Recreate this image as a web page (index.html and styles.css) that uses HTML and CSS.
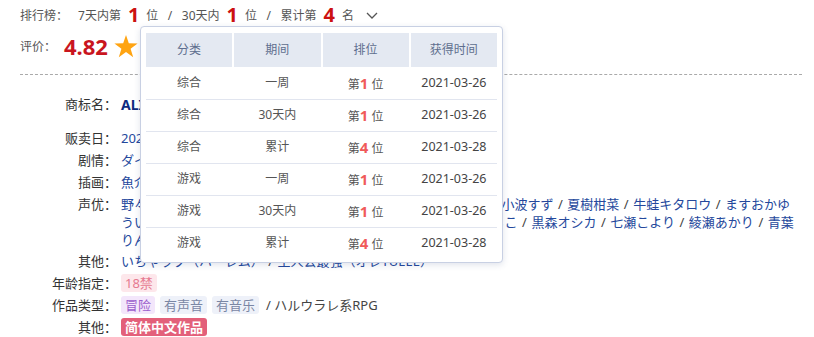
FILE: index.html
```html
<!DOCTYPE html>
<html lang="zh-CN">
<head>
    <meta charset="utf-8">
    <title>作品详情</title>
    <link rel="stylesheet" href="styles.css">
</head>
<body>
<div class="page">
    <div class="summary">
        <div class="rank">
            <span class="caption">排行榜：</span>
            <span class="first">7天内第</span><b class="num">1</b><span>位</span>
            <span class="slash">/</span>
            <span>30天内</span><b class="num">1</b><span>位</span>
            <span class="slash">/</span>
            <span>累计第</span><b class="num">4</b><span>名</span>
            <svg class="chevron" width="12" height="7" viewBox="0 0 12 7"><polyline points="1,1 6,6 11,1" fill="none" stroke="#555" stroke-width="1.3"/></svg>
        </div>
        <div class="score">
            <span class="caption">评价：</span>
            <b class="rating">4.82</b>
            <svg class="star" width="24" height="23" viewBox="0 0 24 23"><polygon points="12,0 14.8,8.3 23.6,8.4 16.6,13.7 19.2,22.2 12,17.1 4.8,22.2 7.4,13.7 0.4,8.4 9.2,8.3" fill="#ffa412"/></svg>
        </div>
    </div>

    <!-- rank history popup -->
    <div class="rank-popup">
        <div class="rank-head">
            <span>分类</span><span>期间</span><span>排位</span><span>获得时间</span>
        </div>
        <div class="rank-row"><span>综合</span><span>一周</span><span>第<b>1</b>位</span><span class="date">2021-03-26</span></div>
        <div class="rank-row"><span>综合</span><span>30天内</span><span>第<b>1</b>位</span><span class="date">2021-03-26</span></div>
        <div class="rank-row"><span>综合</span><span>累计</span><span>第<b>4</b>位</span><span class="date">2021-03-28</span></div>
        <div class="rank-row"><span>游戏</span><span>一周</span><span>第<b>1</b>位</span><span class="date">2021-03-26</span></div>
        <div class="rank-row"><span>游戏</span><span>30天内</span><span>第<b>1</b>位</span><span class="date">2021-03-26</span></div>
        <div class="rank-row"><span>游戏</span><span>累计</span><span>第<b>4</b>位</span><span class="date">2021-03-28</span></div>
    </div>

    <div class="info">
        <div class="info-row maker">
            <div class="info-label">商标名：</div>
            <div class="info-value"><a href="#" class="brand">ALICESOFT</a></div>
        </div>
        <div class="info-row">
            <div class="info-label">贩卖日：</div>
            <div class="info-value"><a href="#">2021年03月25日 0時</a></div>
        </div>
        <div class="info-row">
            <div class="info-label">剧情：</div>
            <div class="info-value"><a href="#">ダイナミック太郎</a></div>
        </div>
        <div class="info-row">
            <div class="info-label">插画：</div>
            <div class="info-value"><a href="#">魚介</a></div>
        </div>
        <div class="info-row">
            <div class="info-label">声优：</div>
            <div class="info-value names"><a href="#">野々原ゆずこ</a><i>/</i><a href="#">一ノ瀬ひまわり</a><i>/</i><a href="#">小鳥遊ちはや</a><i>/</i><a href="#">西園寺まりな</a><i>/</i><a href="#">小波すず</a><i>/</i><a href="#">夏樹柑菜</a><i>/</i><a href="#">牛蛙キタロウ</a><i>/</i><a href="#">ますおかゆうい</a><i>/</i><a href="#">一条院ひより</a><i>/</i><a href="#">春日野 さくら</a><i>/</i><a href="#">小鳥遊みやび</a><i>/</i><a href="#">久遠寺まちこ</a><i>/</i><a href="#">黒森オシカ</a><i>/</i><a href="#">七瀬こより</a><i>/</i><a href="#">綾瀬あかり</a><i>/</i><a href="#">青葉りんご</a><i>/</i><a href="#">白雪しずく</a><i>/</i><a href="#">桜木めい</a></div>
        </div>
        <div class="info-row">
            <div class="info-label">其他：</div>
            <div class="info-value"><a href="#">いちゃラブ（ハーレム）</a><i>/</i><a href="#">主人公最強（オレTUEEE）</a></div>
        </div>
        <div class="info-row">
            <div class="info-label">年龄指定：</div>
            <div class="info-value"><span class="tag tag-age">18禁</span></div>
        </div>
        <div class="info-row">
            <div class="info-label">作品类型：</div>
            <div class="info-value"><span class="tag tag-genre">冒险</span><span class="tag tag-plain">有声音</span><span class="tag tag-plain">有音乐</span><span class="extra">/ ハルウラレ系RPG</span></div>
        </div>
        <div class="info-row">
            <div class="info-label">其他：</div>
            <div class="info-value"><span class="tag tag-lang">简体中文作品</span></div>
        </div>
    </div>
</div>
</body>
</html>
```

FILE: styles.css
```css
/* Base
---------------------------------------------------------------- */
html, body {
    margin: 0;
    padding: 0;
    }
body {
    padding: 0 12px 0 20px;
    font-family: "Noto Sans", "Noto Sans CJK SC", sans-serif;
    font-size: 13px;
    color: #444;
    background: #fff;
    }
a {
    color: #24489c;
    text-decoration: none;
    }
.page {
    position: relative;
    }

/* Rank + rating summary
---------------------------------------------------------------- */
.summary {
    font-size: 12px;
    color: #555;
    border-bottom: 1px dashed #aaa;
    padding-bottom: 12px;
    }
.rank {
    display: flex;
    align-items: center;
    height: 30px;
    }
.rank .first { margin-left: 10px; }
.rank .num {
    font-size: 20px;
    color: #cc1111;
    margin: 0 7px;
    line-height: 1;
    }
.rank .slash { margin: 0 9.5px; }
.chevron { margin-left: 12px; }
.score {
    display: flex;
    align-items: center;
    height: 32px;
    }
.rating {
    margin-left: 8px;
    font-size: 22px;
    color: #c9151e;
    line-height: 1;
    }
.star { margin-left: 6px; }

/* Popup table
---------------------------------------------------------------- */
.rank-popup {
    position: absolute;
    left: 120px;
    top: 26px;
    width: 351px;
    padding: 6px 5px 3px;
    background: #fff;
    border: 1px solid #c8d0e3;
    border-radius: 4px;
    box-shadow: 0 2px 6px rgba(50, 70, 120, .15);
    font-size: 12px;
    color: #555;
    z-index: 5;
    }
.rank-head, .rank-row {
    display: grid;
    grid-template-columns: repeat(4, 1fr);
    column-gap: 2px;
    text-align: center;
    }
.rank-head span {
    background: #e4e9f2;
    color: #5e6e8e;
    height: 34px;
    line-height: 34px;
    }
.rank-row {
    height: 32px;
    line-height: 32px;
    box-sizing: border-box;
    }
.rank-row + .rank-row {
    border-top: 1px solid #e1e5ef;
    line-height: 30px;
    }
.rank-row b {
    font-size: 15px;
    color: #f05a5a;
    padding-right: 3px;
    }
.rank-row .date {
    font-size: 12.5px;
    color: #444;
    }

/* Work info
---------------------------------------------------------------- */
.info {
    padding-top: 20px;
    }
.info-row {
    display: grid;
    grid-template-columns: 101px 1fr;
    line-height: 19px;
    margin-bottom: 3px;
    }
.info-row.maker { margin-bottom: 14px; }
.info-label {
    text-align: right;
    padding-right: 4px;
    color: #333;
    }
.info-value.names { line-height: 18px; }
.info-value i {
    font-style: normal;
    color: #444;
    margin: 0 4.5px;
    }
.brand {
    font-weight: bold;
    font-size: 14px;
    color: #0d2a7f;
    }
.tag {
    display: inline-block;
    line-height: 18px;
    padding: 0 4px;
    margin-right: 5px;
    border-radius: 3px;
    vertical-align: top;
    }
.tag-age { background: #fde7eb; color: #e67a90; }
.tag-genre { background: #f3e6fb; color: #9a5ccc; }
.tag-plain { background: #eef1f9; color: #7a86a4; }
.tag-lang {
    background: #e3607a;
    color: #fff;
    font-weight: bold;
    }
.extra {
    margin-left: 2px;
    color: #444;
    }
```
